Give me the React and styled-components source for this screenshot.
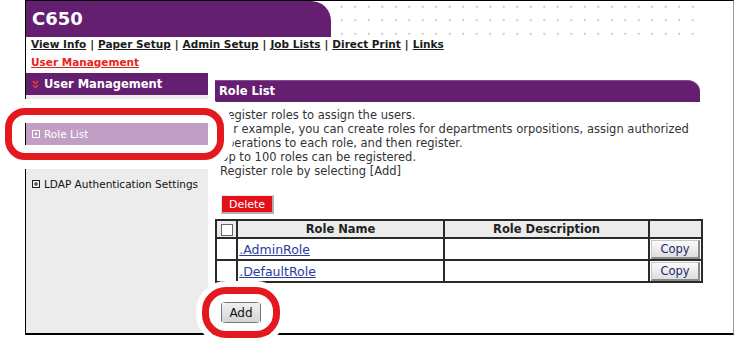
import React from "react";
import styled, { createGlobalStyle } from "styled-components";

const GlobalStyle = createGlobalStyle`
  html, body {
    margin: 0;
    padding: 0;
    background: #fff;
  }
  body {
    font-family: "DejaVu Sans", Verdana, sans-serif;
    color: #222;
  }
`;

const PURPLE = "#641f71";

const Page = styled.div`
  position: relative;
  width: 735px;
  height: 343px;
  overflow: hidden;
`;

const Frame = styled.div`
  box-sizing: border-box;
  margin-left: 25px;
  width: 709px;
  height: 335px;
  border-top: 1px solid #000;
  border-left: 1px solid #000;
  border-right: 1px solid #9a9a9a;
  border-bottom: 2px solid #000;
  display: flex;
  flex-direction: column;
`;

const Header = styled.div`
  display: flex;
  height: 36px;
`;

const Brand = styled.div`
  width: 305px;
  background: ${PURPLE};
  border-top-right-radius: 20px;
  color: #fff;
  font-weight: bold;
  font-size: 18px;
  line-height: 36px;
  padding-left: 6px;
  box-sizing: border-box;
`;

const Dots = styled.div`
  width: 362px;
  margin-left: 4px;
  background-image: radial-gradient(circle, #c8c8c8 0.9px, transparent 1.4px);
  background-size: 13.5px 13.5px;
  background-position: 0 -1px;
`;

const Nav = styled.div`
  padding-left: 5px;
  font-size: 10.5px;
  font-weight: bold;
  line-height: 14px;
  display: flex;
  flex-direction: column;
  gap: 4px;
`;

const NavRow = styled.div`
  display: flex;
  gap: 4px;
  white-space: nowrap;
`;

const NavLink = styled.a`
  color: ${(p) => (p.$active ? "#e52420" : "#1a1a1a")};
  text-decoration: underline;
`;

const Columns = styled.div`
  display: flex;
  flex: 1;
  margin-top: 4px;
`;

const Sidebar = styled.div`
  width: 182px;
  display: flex;
  flex-direction: column;
  background: #ececec;
`;

const SideHeader = styled.div`
  height: 22px;
  background: ${PURPLE};
  color: #fff;
  font-weight: bold;
  font-size: 11.5px;
  display: flex;
  align-items: center;
  gap: 5px;
  padding-left: 6px;
`;

const SideItem = styled.div`
  position: relative;
  z-index: ${(p) => (p.$selected ? 2 : "auto")};
  height: 22px;
  display: flex;
  align-items: center;
  gap: 4px;
  padding-left: 6px;
  font-size: 10.5px;
  margin-top: ${(p) => p.$top}px;
  background: ${(p) => (p.$selected ? "#c19fc5" : "transparent")};
  box-shadow: ${(p) => (p.$selected ? "-1px 0 0 #000" : "none")};
  color: ${(p) => (p.$selected ? "#fff" : "#111")};
`;

const Main = styled.div`
  margin-left: 7px;
  margin-top: 7px;
  width: 488px;
  display: flex;
  flex-direction: column;
  align-items: flex-start;
`;

const MainHeader = styled.div`
  box-sizing: border-box;
  width: 485px;
  height: 22px;
  background: ${PURPLE};
  border-top: 1px solid #8a4a94;
  border-top-right-radius: 12px;
  color: #fff;
  font-weight: bold;
  font-size: 11.5px;
  line-height: 21px;
  padding-left: 4px;
`;

const Intro = styled.p`
  margin: 6px 0 0;
  padding-left: 5px;
  font-size: 11.5px;
  line-height: 14px;
  color: #333;
  white-space: nowrap;
`;

const DeleteButton = styled.button`
  margin: 17px 0 0 6px;
  width: 53px;
  height: 19px;
  padding: 0;
  background: #e40f1b;
  color: #fff;
  font-family: inherit;
  font-size: 11px;
  border: 1px solid #e8e8e8;
  border-right: 2px solid #b0b0b0;
  border-bottom: 2px solid #b0b0b0;
`;

const Table = styled.table`
  margin-top: 5px;
  width: 488px;
  border-collapse: collapse;
  border: 2px solid #2a2a2a;
  font-size: 11.5px;
`;

const Th = styled.th`
  height: 16px;
  padding: 0;
  background: #ececec;
  border: 2px solid #2a2a2a;
  color: #222;
  font-weight: bold;
  text-align: center;
  width: ${(p) => p.$w}px;
`;

const Td = styled.td`
  height: 20px;
  padding: 0;
  border: 2px solid #2a2a2a;
  text-align: ${(p) => (p.$right ? "right" : "left")};
  vertical-align: middle;
`;

const Check = styled.span`
  display: inline-block;
  width: 10px;
  height: 10px;
  background: #fff;
  border: 1px solid #666;
  vertical-align: middle;
`;

const RoleLink = styled.a`
  color: #2a3c9c;
  font-size: 12.5px;
  text-decoration: underline;
  padding-left: 1px;
`;

const CopyButton = styled.button`
  width: 49px;
  height: 19px;
  padding: 0;
  margin-right: 1px;
  font-family: inherit;
  font-size: 11.5px;
  color: #1c2a6a;
  background: linear-gradient(#fbfbfb, #dedede);
  border: 1px solid #c8c8c8;
  border-right: 2px solid #8a8a8a;
  border-bottom: 2px solid #8a8a8a;
`;

const AddButton = styled.button`
  margin: 19px 0 0 6px;
  width: 40px;
  height: 21px;
  padding: 0;
  font-family: inherit;
  font-size: 12px;
  color: #111;
  background: linear-gradient(#f0f0f0, #d4d4d4);
  border: 1px solid #777;
`;

const Callout = styled.div`
  position: absolute;
  box-sizing: border-box;
  border: 7px solid #e3191f;
  border-radius: ${(p) => p.$radius}px;
  box-shadow: 0 0 0 ${(p) => p.$halo}px #fff, inset 0 0 0 8px #fff;
`;

const Chevrons = () => (
  <svg width="7" height="9" viewBox="0 0 7 9">
    <path d="M0.8 1 L3.5 3.6 L6.2 1 M0.8 5 L3.5 7.6 L6.2 5" fill="none" stroke="#e33b3b" strokeWidth="1.6" />
  </svg>
);

const BoxIcon = ({ color, plus }) => (
  <svg width="8" height="8" viewBox="0 0 8 8">
    <rect x="0.5" y="0.5" width="7" height="7" fill="none" stroke={color} />
    {plus ? (
      <path d="M2 4 H6 M4 2 V6" stroke={color} />
    ) : (
      <rect x="3" y="3" width="2" height="2" fill={color} />
    )}
  </svg>
);

const links = ["View Info", "Paper Setup", "Admin Setup", "Job Lists", "Direct Print", "Links"];
const roles = [".AdminRole", ".DefaultRole"];

export default function App() {
  return (
    <Page>
      <GlobalStyle />
      <Frame>
        <Header>
          <Brand>C650</Brand>
          <Dots />
        </Header>
        <Nav>
          <NavRow>
            {links.map((l, i) => (
              <React.Fragment key={l}>
                {i > 0 && <span>|</span>}
                <NavLink>{l}</NavLink>
              </React.Fragment>
            ))}
          </NavRow>
          <NavRow>
            <NavLink $active>User Management</NavLink>
          </NavRow>
        </Nav>
        <Columns>
          <Sidebar>
            <SideHeader>
              <Chevrons />
              User Management
            </SideHeader>
            <SideItem $selected $top={28}>
              <BoxIcon color="#fff" />
              Role List
            </SideItem>
            <SideItem $top={28}>
              <BoxIcon color="#222" plus />
              LDAP Authentication Settings
            </SideItem>
          </Sidebar>
          <Main>
            <MainHeader>Role List</MainHeader>
            <Intro>
              Register roles to assign the users.
              <br />
              For example, you can create roles for departments orpositions, assign authorized
              <br />
              operations to each role, and then register.
              <br />
              Up to 100 roles can be registered.
              <br />
              Register role by selecting [Add]
            </Intro>
            <DeleteButton>Delete</DeleteButton>
            <Table>
              <thead>
                <tr>
                  <Th $w={19}>
                    <Check />
                  </Th>
                  <Th $w={202}>Role Name</Th>
                  <Th $w={201}>Role Description</Th>
                  <Th $w={50} />
                </tr>
              </thead>
              <tbody>
                {roles.map((r) => (
                  <tr key={r}>
                    <Td />
                    <Td>
                      <RoleLink>{r}</RoleLink>
                    </Td>
                    <Td />
                    <Td $right>
                      <CopyButton>Copy</CopyButton>
                    </Td>
                  </tr>
                ))}
              </tbody>
            </Table>
            <AddButton>Add</AddButton>
          </Main>
        </Columns>
      </Frame>
      <Callout $radius={20} $halo={9} style={{ left: 5, top: 108, width: 219, height: 52 }} />
      <Callout $radius={24} $halo={6} style={{ left: 202, top: 287, width: 78, height: 51 }} />
    </Page>
  );
}
